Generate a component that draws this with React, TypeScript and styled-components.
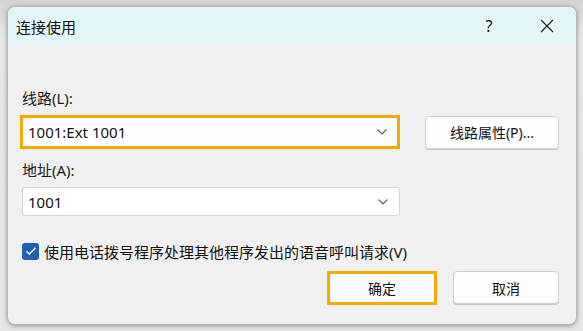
import React from 'react';
import styled, { createGlobalStyle } from 'styled-components';

const GlobalStyle = createGlobalStyle`
  html, body {
    margin: 0;
    padding: 0;
    background: #e4e4e4;
    width: 583px;
    height: 331px;
    overflow: hidden;
  }
  * {
    box-sizing: border-box;
  }
`;

const font = `"Segoe UI", "Noto Sans", "Noto Sans CJK SC", sans-serif`;

const Chevron = () => (
  <svg width="12" height="8" viewBox="0 0 12 8">
    <path d="M1.5 1.5 L6 6 L10.5 1.5" fill="none" stroke="#606060" strokeWidth="1.2" />
  </svg>
);

const CloseIcon = () => (
  <svg width="14" height="14" viewBox="0 0 14 14">
    <path d="M1 1 L13 13 M13 1 L1 13" stroke="#1a1a1a" strokeWidth="1.1" />
  </svg>
);

const CheckIcon = () => (
  <svg width="12" height="10" viewBox="0 0 12 10">
    <path d="M1.5 5.2 L4.5 8 L10.5 1.8" fill="none" stroke="#fff" strokeWidth="1.5" />
  </svg>
);

const App = () => {
  return (
    <>
      <GlobalStyle />
      <Screen>
        <Dialog>
          <TitleBar>
            <Title>连接使用</Title>
            <TitleActions>
              <HelpMark>?</HelpMark>
              <CloseButton>
                <CloseIcon />
              </CloseButton>
            </TitleActions>
          </TitleBar>

          <Body>
            <Label>线路(L):</Label>
            <Row>
              <Combo $highlight $width={380} $height={34}>
                <ComboText>1001:Ext 1001</ComboText>
                <Chevron />
              </Combo>
              <Button $width={134} $height={33}>
                线路属性(P)...
              </Button>
            </Row>

            <Label $top={11}>地址(A):</Label>
            <Row>
              <Combo $width={378} $height={29}>
                <ComboText>1001</ComboText>
                <Chevron />
              </Combo>
            </Row>

            <CheckRow>
              <CheckBox>
                <CheckIcon />
              </CheckBox>
              <CheckLabel>使用电话拨号程序处理其他程序发出的语音呼叫请求(V)</CheckLabel>
            </CheckRow>

            <Footer>
              <Button $highlight $width={110} $height={34}>
                确定
              </Button>
              <Button $width={106} $height={33}>
                取消
              </Button>
            </Footer>
          </Body>
        </Dialog>
      </Screen>
    </>
  );
};

const Screen = styled.div`
  width: 583px;
  height: 331px;
  padding: 6px 6px 6px 7px;
  background: linear-gradient(#d4d4d4, #e8e8e8 40px, #e6e6e6);
`;

const Dialog = styled.div`
  width: 570px;
  height: 319px;
  display: flex;
  flex-direction: column;
  background: #f0f0f0;
  border: 1px solid #b8b8b8;
  border-radius: 8px;
  overflow: hidden;
  box-shadow: 0 1px 4px rgba(0, 0, 0, 0.35);
  font-family: ${font};
  color: #1b1b1b;
`;

const TitleBar = styled.div`
  height: 38px;
  flex: none;
  display: flex;
  align-items: center;
  justify-content: space-between;
  background: #e3f6f7;
  padding: 0 0 0 8px;
`;

const Title = styled.span`
  font-size: 15px;
  color: #111;
`;

const TitleActions = styled.div`
  display: flex;
  align-items: center;
  height: 100%;
`;

const HelpMark = styled.span`
  width: 56px;
  text-align: center;
  font-size: 16px;
  color: #111;
  padding-right: 6px;
`;

const CloseButton = styled.span`
  width: 56px;
  display: flex;
  justify-content: center;
  padding-right: 2px;
`;

const Body = styled.div`
  flex: 1;
  display: flex;
  flex-direction: column;
  padding: 0 17px 0 14px;
`;

const Label = styled.div<{ $top?: number }>`
  margin-top: ${(p) => p.$top ?? 43}px;
  height: 20px;
  line-height: 20px;
  font-size: 15px;
  margin-bottom: 7px;
`;

const Row = styled.div`
  display: flex;
  align-items: center;
  justify-content: space-between;
`;

const Combo = styled.div<{ $highlight?: boolean; $width: number; $height: number }>`
  width: ${(p) => p.$width}px;
  height: ${(p) => p.$height}px;
  display: flex;
  align-items: center;
  justify-content: space-between;
  background: #fff;
  border: ${(p) => (p.$highlight ? '3px solid #f8a900' : '1px solid #d6d6d6')};
  border-radius: ${(p) => (p.$highlight ? 0 : 3)}px;
  margin-left: ${(p) => (p.$highlight ? -2 : 0)}px;
  padding: ${(p) => (p.$highlight ? '0 9px 0 5px' : '0 10px 0 5px')};
`;

const ComboText = styled.span`
  font-size: 15px;
  color: #111;
`;

const Button = styled.div<{ $highlight?: boolean; $width: number; $height: number }>`
  width: ${(p) => p.$width}px;
  height: ${(p) => p.$height}px;
  display: flex;
  align-items: center;
  justify-content: center;
  font-size: 14px;
  color: #111;
  background: #fdfdfd;
  border: ${(p) => (p.$highlight ? '3px solid #f8a900' : '1px solid #d0d0d0')};
  border-radius: ${(p) => (p.$highlight ? 0 : 4)}px;
  box-shadow: ${(p) => (p.$highlight ? 'none' : '0 1px 0 #c4c4c4')};
`;

const CheckRow = styled.div`
  margin-top: 25px;
  height: 20px;
  display: flex;
  align-items: center;
  gap: 5px;
`;

const CheckBox = styled.span`
  width: 17px;
  height: 17px;
  border-radius: 3px;
  background: #2160b5;
  display: flex;
  align-items: center;
  justify-content: center;
`;

const CheckLabel = styled.span`
  font-size: 15px;
  color: #111;
`;

const Footer = styled.div`
  margin-top: 10px;
  display: flex;
  justify-content: flex-end;
  align-items: flex-start;
  gap: 16px;
`;

export default App;
